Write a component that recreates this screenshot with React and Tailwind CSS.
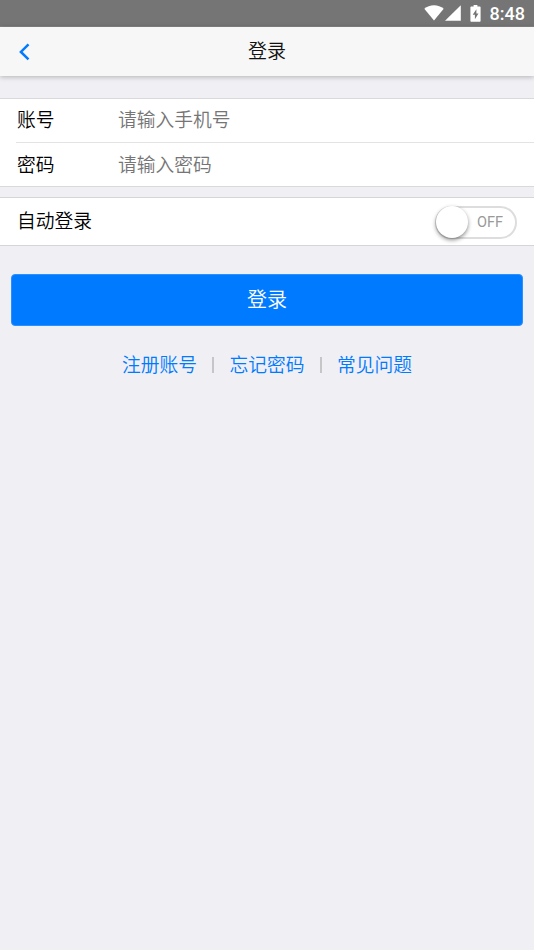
const fields = [
    { name: "account", label: "账号", type: "text", placeholder: "请输入手机号" },
    { name: "password", label: "密码", type: "password", placeholder: "请输入密码" },
];

const links = ["注册账号", "忘记密码", "常见问题"];

const StatusBar = () => (
    <div className="flex h-[27px] items-center justify-end border-b border-[#858585] bg-[#757575] pr-[9px] text-white">
        <svg className="mr-px h-4 w-5" viewBox="0 0 20 16" fill="currentColor">
            <path d="M10 15.6 0.3 3.7C3 1.5 6.3.2 10 .2s7 1.3 9.7 3.5z" />
        </svg>
        <svg className="mr-[9px] h-4 w-4" viewBox="0 0 16 16" fill="currentColor">
            <path d="M15.8.3v15.4H0z" />
        </svg>
        <svg className="mr-[9px] h-[17px] w-[11px]" viewBox="0 0 11 17" fill="currentColor">
            <path
                fillRule="evenodd"
                d="M3.6 0h3.8v1.5h2.2c.6 0 1 .4 1 1v13.2c0 .6-.4 1-1 1H1.4c-.6 0-1-.4-1-1V2.5c0-.6.4-1 1-1h2.2zM6.4 4.2 2.7 9.8h2.2v4.5l3.6-5.8H6.4z"
            />
        </svg>
        <span className="pt-px font-[Roboto,sans-serif] text-[18px] leading-[26px] font-medium">8:48</span>
    </div>
);

const Header = () => (
    <header className="grid h-[49px] grid-cols-[48px_1fr_48px] items-center bg-[#f7f7f7] shadow-[0_1px_5px_rgba(0,0,0,0.25)]">
        <button type="button" className="flex justify-center text-[#007aff]">
            <svg className="h-[18px] w-3" viewBox="0 0 12 18" fill="none" stroke="currentColor" strokeWidth="2.5">
                <path d="M10.5 1.4 2.9 8.9l7.6 7.5" />
            </svg>
        </button>
        <h1 className="pb-1 text-center text-[19px] leading-7 text-[#111]">登录</h1>
    </header>
);

const Toggle = () => (
    <button
        type="button"
        role="switch"
        aria-checked="false"
        className="mt-px flex h-[33px] w-[82px] items-center rounded-full border-2 border-[#dddddd] bg-white"
    >
        <span className="-ml-px h-8 w-8 shrink-0 rounded-full bg-white shadow-[0_2px_4px_rgba(0,0,0,0.45)]" />
        <span className="ml-[9px] pt-px font-[Roboto,sans-serif] text-[14.5px] leading-5 font-normal text-[#999]">OFF</span>
    </button>
);

export default function App() {
    return (
        <div className="min-h-screen bg-[#efeff4] font-['Noto_Sans_CJK_SC',sans-serif] text-[18.75px] font-[350] text-black">
            <StatusBar />
            <Header />

            <form className="pt-[22px]">
                <div className="border-y border-[#d9d9dc] bg-white pl-4">
                    {fields.map((field) => (
                        <label
                            key={field.name}
                            className="flex h-11 items-center border-b border-[#e3e3e5] pb-[3px] pl-px last:h-[43px] last:border-b-0 last:pb-px"
                        >
                            <span className="w-[101px] shrink-0">{field.label}</span>
                            <input
                                type={field.type}
                                placeholder={field.placeholder}
                                className="min-w-0 flex-1 outline-none placeholder:text-[#757575]"
                            />
                        </label>
                    ))}
                </div>

                <div className="mt-[10px] flex h-[49px] items-center justify-between border-y border-[#d5d5d8] bg-white pr-[17px] pl-[17px]">
                    <span className="pb-[3px]">自动登录</span>
                    <Toggle />
                </div>

                <button
                    type="button"
                    className="mx-[11px] mt-7 flex h-[52px] w-[512px] items-center justify-center rounded-[4px] border border-[#2b90ff] bg-[#007aff] pb-[3px] text-[20px] text-white"
                >
                    登录
                </button>
            </form>

            <nav className="mt-6 flex items-center justify-center text-[#007aff]">
                {links.map((text, i) => (
                    <div key={text} className="flex items-center">
                        {i > 0 && <span className="mx-[15.25px] mt-px h-4 w-[2px] bg-[#c6c6c9]" />}
                        <a href="#">{text}</a>
                    </div>
                ))}
            </nav>
        </div>
    );
}
